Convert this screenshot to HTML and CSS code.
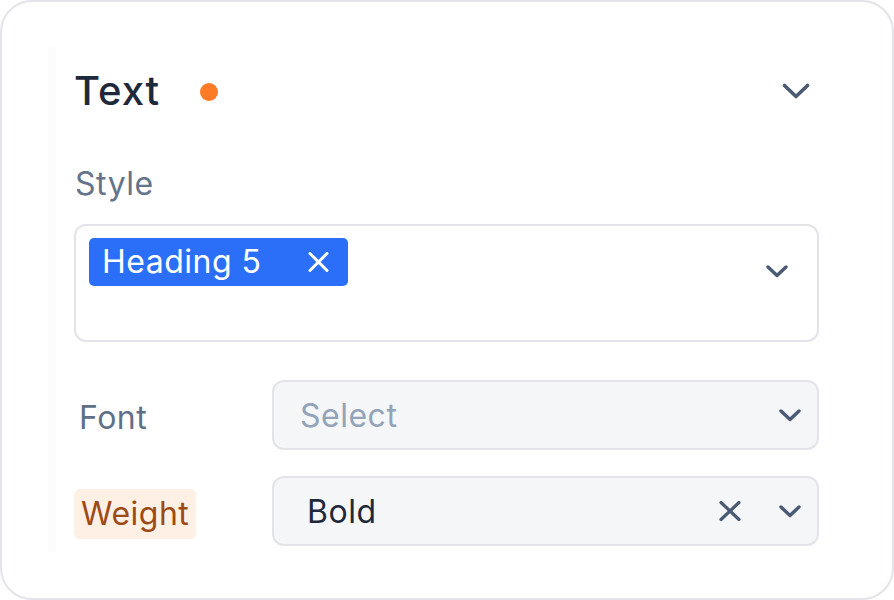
FILE: index.html
```html
<!DOCTYPE html>
<html lang="en">
<head>
<meta charset="utf-8">
<title>Text settings</title>
<link rel="stylesheet" href="styles.css">
</head>
<body>
<div class="card">
  <div class="panel">
    <div class="title-row">
      <span class="title">Text</span>
      <span class="dot"></span>
      <span class="spacer"></span>
      <svg class="chev-lg" width="28" height="16" viewBox="0 0 28 16"><path d="M2.5 2.5 L14 13.5 L25.5 2.5" fill="none" stroke="#4a5a72" stroke-width="3.6" stroke-linecap="round" stroke-linejoin="round"/></svg>
    </div>

    <div class="field-label">Style</div>
    <div class="multi">
      <div class="tags">
        <span class="tag">
          <span class="tag-text">Heading 5</span>
          <svg width="21" height="20" viewBox="0 0 21 20"><path d="M2 1.5 L19 18.5 M19 1.5 L2 18.5" fill="none" stroke="#ffffff" stroke-width="3" stroke-linecap="round"/></svg>
        </span>
      </div>
      <svg class="chev-sm multi-chev" width="22" height="13" viewBox="0 0 22 13"><path d="M2 2 L11 10.5 L20 2" fill="none" stroke="#4a5a72" stroke-width="3.4" stroke-linecap="round" stroke-linejoin="round"/></svg>
    </div>

    <div class="row row-font">
      <div class="label"><span class="label-text">Font</span></div>
      <div class="select">
        <span class="placeholder">Select</span>
        <span class="spacer"></span>
        <svg class="chev-sm" width="22" height="13" viewBox="0 0 22 13"><path d="M2 2 L11 10.5 L20 2" fill="none" stroke="#4a5a72" stroke-width="3.4" stroke-linecap="round" stroke-linejoin="round"/></svg>
      </div>
    </div>

    <div class="row row-weight">
      <div class="label"><span class="label-text highlight">Weight</span></div>
      <div class="select">
        <span class="value">Bold</span>
        <span class="spacer"></span>
        <svg class="clear" width="22" height="20" viewBox="0 0 22 20"><path d="M2 1.5 L20 18.5 M20 1.5 L2 18.5" fill="none" stroke="#4a5a72" stroke-width="3.2" stroke-linecap="round"/></svg>
        <svg class="chev-sm" width="22" height="13" viewBox="0 0 22 13"><path d="M2 2 L11 10.5 L20 2" fill="none" stroke="#4a5a72" stroke-width="3.4" stroke-linecap="round" stroke-linejoin="round"/></svg>
      </div>
    </div>
  </div>
</div>
</body>
</html>
```

FILE: styles.css
```css
* { box-sizing: border-box; }

html, body {
  margin: 0;
  padding: 0;
  background: #ffffff;
}

body {
  font-family: Inter, "Noto Sans", "Liberation Sans", sans-serif;
  letter-spacing: 0.5px;
  width: 894px;
  height: 600px;
  overflow: hidden;
}

.card {
  width: 894px;
  height: 600px;
  border: 2px solid #e2e4e9;
  border-radius: 32px;
  background: #ffffff;
  padding: 44px 0 0 46px;
}

.panel {
  width: 798px;
  height: 506px;
  border-left: 8px solid #fcfcfd;
  padding: 21px 27px 6px 18px;
}

.title-row {
  display: flex;
  align-items: center;
  height: 48px;
}

.title {
  font-size: 40px;
  line-height: 48px;
  font-weight: 500;
  letter-spacing: 1px;
  color: #1e293b;
}

.dot {
  width: 18px;
  height: 18px;
  border-radius: 50%;
  background: #fb7b26;
  margin-left: 40px;
  margin-top: 2px;
}

.spacer { flex: 1; }

.chev-lg {
  margin-right: 9px;
  display: block;
}

.field-label {
  margin-top: 49px;
  font-size: 32px;
  line-height: 40px;
  color: #64748b;
  padding-left: 1px;
}

.multi {
  margin-top: 20px;
  height: 118px;
  border: 2px solid #e2e4e9;
  border-radius: 12px;
  background: #ffffff;
  display: flex;
  align-items: flex-start;
  padding: 12px 29px 12px 13px;
}

.tags {
  flex: 1;
  display: flex;
}

.tag {
  display: flex;
  align-items: center;
  height: 48px;
  background: #2b6ff8;
  border-radius: 5px;
  padding: 0 19px 0 13px;
  gap: 46px;
}

.tag svg { display: block; }

.tag-text {
  font-size: 32px;
  line-height: 48px;
  color: #ffffff;
}

.multi-chev {
  margin-top: 27px;
  display: block;
}

.row {
  display: flex;
  align-items: center;
}

.row-font { margin-top: 38px; }
.row-weight { margin-top: 26px; }

.label {
  width: 198px;
  flex: none;
  padding-top: 6px;
}

.label-text {
  display: inline-block;
  font-size: 32px;
  line-height: 50px;
  color: #5f6f88;
  padding: 0 8px 0 5px;
  border-radius: 6px;
}

.label-text.highlight {
  background: #fff0e5;
  color: #9d4b16;
  padding: 0 7px 0 7px;
}

.select {
  flex: 1;
  height: 70px;
  border: 2px solid #e2e4e9;
  border-radius: 12px;
  background: #f5f6f8;
  display: flex;
  align-items: center;
  padding: 0 16px 0 26px;
}

.select svg { display: block; }

.placeholder {
  font-size: 32px;
  color: #94a3b8;
}

.value {
  font-size: 32px;
  color: #1e293b;
  margin-left: 7px;
}

.clear {
  margin-right: 38px;
}
```
